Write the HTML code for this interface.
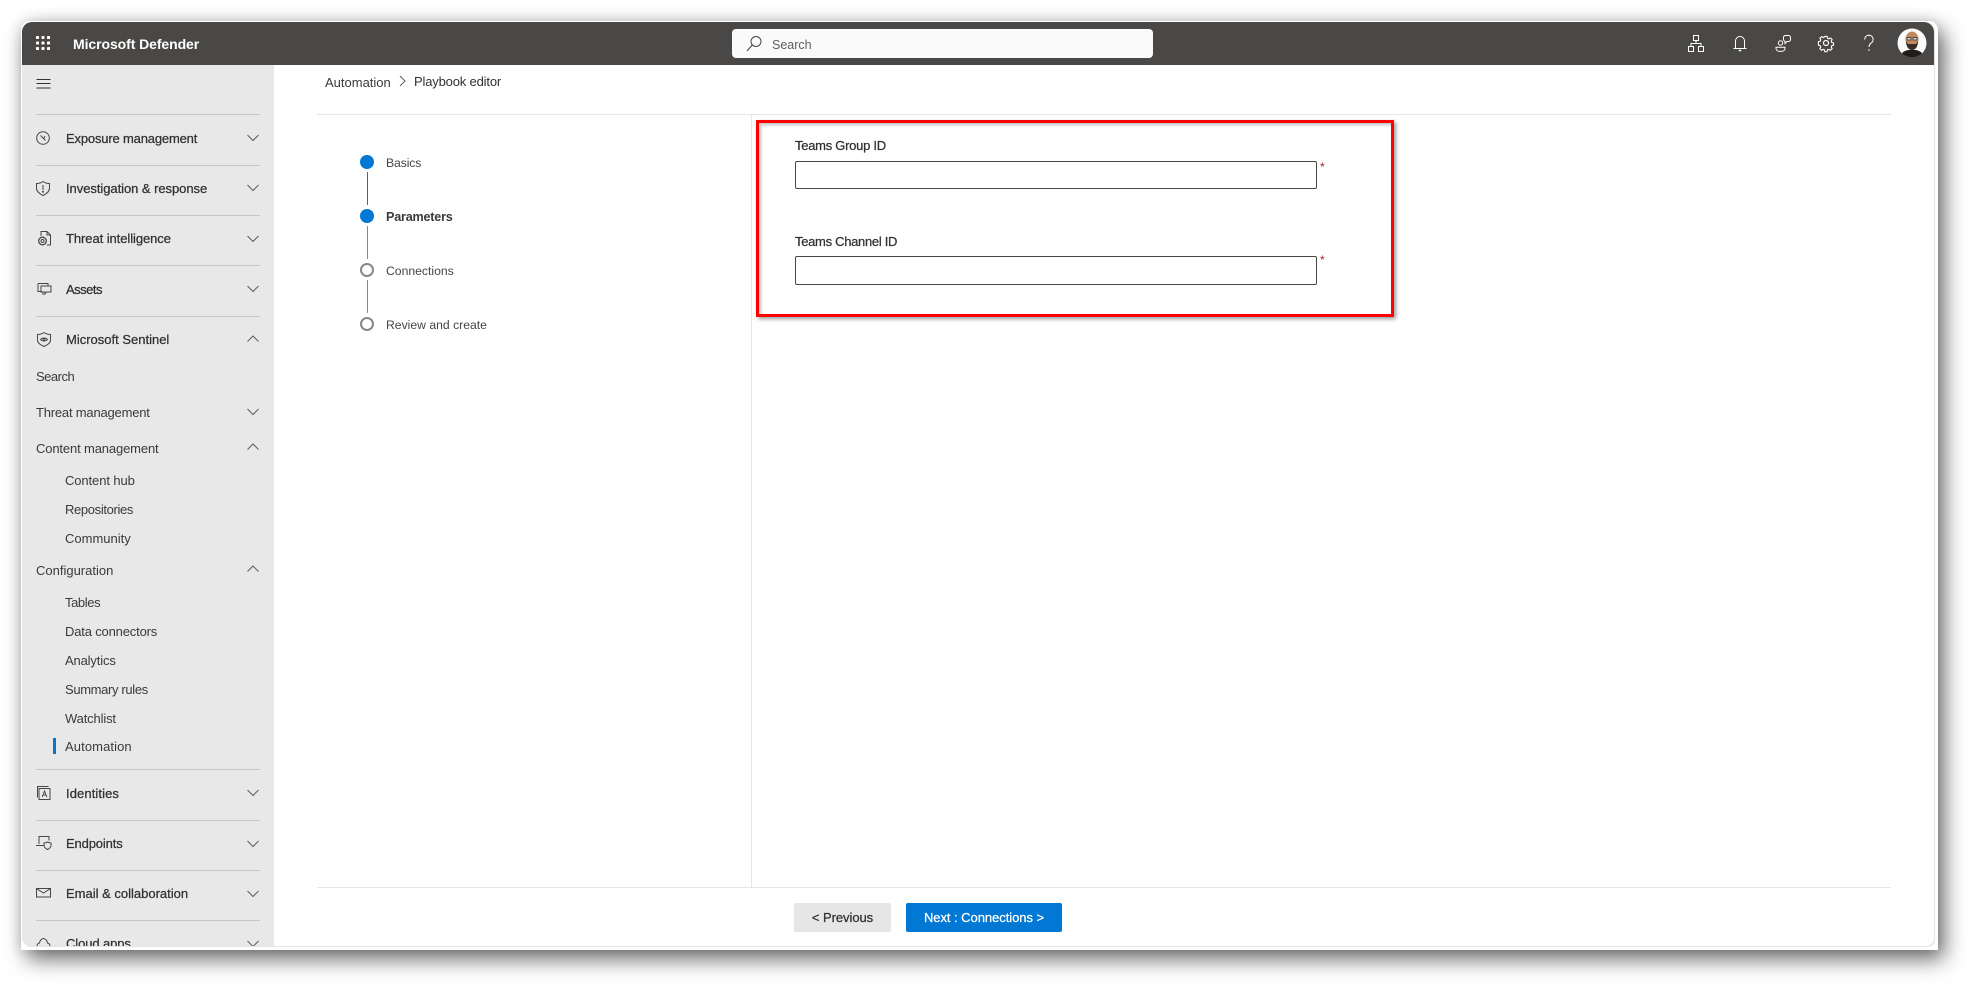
<!DOCTYPE html>
<html lang="en"><head><meta charset="utf-8"><title>Microsoft Defender</title>
<style>
html,body{margin:0;padding:0;background:#fff;width:1980px;height:993px;overflow:hidden}
body{position:relative;font-family:"Liberation Sans",sans-serif;color:#323130}
.abs,.t,.d,.c,.i{position:absolute}
.t{font-size:13px;line-height:20px;white-space:nowrap;color:#3b3a39}
.m{-webkit-text-stroke:.25px currentColor;color:#323130}
.d{left:14px;width:224px;height:1px;background:#c6c6c6}
.c{left:225px;width:12px;height:8px;fill:none;stroke:#605e5c;stroke-width:1}
.i{fill:none;stroke:#484644;stroke-width:1}
.s{font-size:12.2px;color:#484644}
svg{overflow:visible}
#frame{position:absolute;left:21px;top:21px;width:1917px;height:929px;background:#fff;border-radius:9px 9px 0 0;box-shadow:6px 9px 22px rgba(0,0,0,.58),0 0 14px rgba(0,0,0,.12)}
#win{position:absolute;left:22px;top:22px;width:1912px;height:924px;overflow:hidden;border-radius:10px 10px 8px 8px;background:#fff;box-shadow:1px 1px 0 #e4e4e4}
#top{position:absolute;left:0;top:0;width:1912px;height:43px;background:#4a4846}
#side{position:absolute;left:0;top:43px;width:252px;height:881px;background:#e8e8e8;overflow:hidden}
</style></head><body>
<div id="frame"></div>
<div id="win">
 <div id="top">
  <svg class="abs" style="left:14px;top:14px" width="14" height="14" fill="#fff"><rect x="0" y="0" width="3" height="3" rx=".8"/><rect x="5.5" y="0" width="3" height="3" rx=".8"/><rect x="11" y="0" width="3" height="3" rx=".8"/><rect x="0" y="5.5" width="3" height="3" rx=".8"/><rect x="5.5" y="5.5" width="3" height="3" rx=".8"/><rect x="11" y="5.5" width="3" height="3" rx=".8"/><rect x="0" y="11" width="3" height="3" rx=".8"/><rect x="5.5" y="11" width="3" height="3" rx=".8"/><rect x="11" y="11" width="3" height="3" rx=".8"/></svg>
  <span class="t" style="left:51px;top:12px;color:#fff;font-size:14px;font-weight:bold;letter-spacing:-.08px">Microsoft Defender</span>
  <div class="abs" style="left:710px;top:7px;width:421px;height:29px;background:#fafafa;border-radius:4px"></div>
  <svg class="abs" style="left:724px;top:13px" width="16" height="17" fill="none" stroke="#484644"><circle cx="10" cy="6.5" r="5"/><path d="M6.3 10 1 16"/></svg>
  <span class="t" style="left:750px;top:13px;font-size:12.5px;color:#605e5c">Search</span>
  <svg class="abs" style="left:1666px;top:13px" width="16" height="17" fill="none" stroke="#fff"><rect x="5.5" y=".5" width="5" height="5"/><rect x=".5" y="11.5" width="5" height="5"/><rect x="10.5" y="11.5" width="5" height="5"/><path d="M8 5.5v3M3 11.5v-3h10v3"/></svg>
  <svg class="abs" style="left:1711px;top:13px" width="14" height="17" fill="none" stroke="#fff"><path d="M2.5 13V6a4.5 4.5 0 0 1 9 0v7M.5 13.5h13"/><path d="M5.8 15.5h2.4" stroke-width="1.5"/></svg>
  <svg class="abs" style="left:1753px;top:13px" width="16" height="17" fill="none" stroke="#fff"><circle cx="5.5" cy="8" r="2.2"/><path d="M1 12.2h9v1.2a3.5 3.5 0 0 1-3.5 3H4.500a3.500 3.500 0 0 1-3.500-3z"/><path d="M8.500 2.500a2 2 0 0 1 2-2h3a2 2 0 0 1 2 2v2a2 2 0 0 1-2 2h-1.500l-2 2V6.300a2 2 0 0 1-1.500-1.800z"/></svg>
  <svg class="abs" style="left:1796px;top:13px" width="16" height="16" viewBox="0 0 16 16" fill="none" stroke="#fff" stroke-width="1.200"><circle cx="8" cy="8" r="2.500"/><path d="M6.700.7h2.600l.4 2 1.500.7 1.800-1 1.800 1.800-1 1.800.6 1.500 2 .5v2.500l-2 .5-.6 1.500 1 1.800-1.800 1.800-1.800-1-1.500.6-.4 2H6.700l-.4-2-1.500-.6-1.800 1-1.800-1.800 1-1.800-.6-1.500-2-.5V6.500l2-.5.600-1.500-1-1.800 1.800-1.800 1.800 1 1.500-.7z" transform="translate(.8 .8) scale(.9)"/></svg>
  <svg class="abs" style="left:1842px;top:13px" width="10" height="17" fill="none" stroke="#fff"><path d="M.7 4.500a4.200 4.200 0 1 1 6.700 3.300C6 9 5 9.800 5 12"/><circle cx="5" cy="15" r=".8" fill="#fff" stroke="none"/></svg>
  <svg class="abs" style="left:1875px;top:6px" width="30" height="30" viewBox="0 0 30 30"><defs><clipPath id="av"><circle cx="15" cy="15" r="14.500"/></clipPath></defs><circle cx="15" cy="15" r="14.500" fill="#fbfbfb"/><g clip-path="url(#av)"><path d="M3 31c0-6 4-8 8-9h8c4 1 8 3 8 9z" fill="#1f1d1c"/><ellipse cx="15" cy="11.500" rx="6.500" ry="8" fill="#c08a5e"/><path d="M9 13c0 5 2 9 6 9s6-4 6-9c-1 2.500-2 3-3 3h-6c-1 0-2-.5-3-3z" fill="#3a2c22"/><path d="M10 9.500h4v2.500h-4zM16 9.500h4v2.500h-4z" fill="#cfcfcf" stroke="#333" stroke-width=".7"/></g></svg>
 </div>
 <div id="side">
  <svg class="abs" style="left:14px;top:13px" width="16" height="10" stroke="#323130"><path d="M.5 1.500h14M.5 5.500h14M.5 10h14"/></svg>
  <div class="d" style="top:49px"></div>
  <svg class="i" style="left:14px;top:66px" width="15" height="15"><circle cx="7" cy="7" r="6.300"/><path d="M4.500 4.500 7 7l2.500 2.500M9 5 7.500 8"/></svg>
  <span class="t m" style="left:44px;top:64px;letter-spacing:-.17px">Exposure management</span>
  <svg class="c" style="top:69px"><path d="M.5 1 6 6.500 11.500 1"/></svg>
  <div class="d" style="top:100px"></div>
  <svg class="i" style="left:14px;top:116px" width="14" height="15"><path d="M7 .5C5 2 3 2.500.5 2.500V7c0 3.500 2.500 5.500 6.500 7.500 4-2 6.500-4 6.500-7.500V2.500C11 2.500 9 2 7 .5zM7 4v5"/><circle cx="7" cy="10.800" r=".5"/></svg>
  <span class="t m" style="left:44px;top:114px;letter-spacing:-.05px">Investigation &amp; response</span>
  <svg class="c" style="top:119px"><path d="M.5 1 6 6.500 11.500 1"/></svg>
  <div class="d" style="top:150px"></div>
  <svg class="i" style="left:16px;top:166px" width="13" height="15"><path d="M3 5V.5h6l3.500 3.500v10H9M9 .5V4h3.500"/><circle cx="4.500" cy="10" r="3.800" stroke-width="1.300"/><circle cx="4.500" cy="10" r="1.500"/></svg>
  <span class="t m" style="left:44px;top:164px;letter-spacing:-.07px">Threat intelligence</span>
  <svg class="c" style="top:170px"><path d="M.5 1 6 6.500 11.500 1"/></svg>
  <div class="d" style="top:200px"></div>
  <svg class="i" style="left:15px;top:218px" width="15" height="14"><path d="M1 .5h10v2.500M5 8.500H1V.5M4 3h10v6H9.500L8 11V9H4zM6 12v-2.500"/></svg>
  <span class="t m" style="left:44px;top:215px;letter-spacing:-.5px">Assets</span>
  <svg class="c" style="top:220px"><path d="M.5 1 6 6.500 11.500 1"/></svg>
  <div class="d" style="top:251px"></div>
  <svg class="i" style="left:15px;top:267px" width="14" height="15"><path d="M7 .5C5 2 3 2.500.5 2.500V8c0 3 2.500 4.500 6.500 6.500 4-2 6.500-3.500 6.500-6.500V2.500C11 2.500 9 2 7 .5z"/><path d="M3.500 7.500C5 5.500 9 5.500 10.500 7.500 9 9.500 5 9.500 3.500 7.500z"/><circle cx="7" cy="7.500" r="1"/></svg>
  <span class="t m" style="left:44px;top:265px">Microsoft Sentinel</span>
  <svg class="c" style="top:270px"><path d="M.5 6.500 6 1l5.500 5.500"/></svg>
  <span class="t" style="left:14px;top:302px;letter-spacing:-.5px">Search</span>
  <span class="t" style="left:14px;top:338px;letter-spacing:-.2px">Threat management</span>
  <svg class="c" style="top:343px"><path d="M.5 1 6 6.500 11.500 1"/></svg>
  <span class="t" style="left:14px;top:374px;letter-spacing:-.14px">Content management</span>
  <svg class="c" style="top:378px"><path d="M.5 6.500 6 1l5.500 5.500"/></svg>
  <span class="t" style="left:43px;top:406px;letter-spacing:-.1px">Content hub</span>
  <span class="t" style="left:43px;top:435px;letter-spacing:-.35px">Repositories</span>
  <span class="t" style="left:43px;top:464px">Community</span>
  <span class="t" style="left:14px;top:496px">Configuration</span>
  <svg class="c" style="top:500px"><path d="M.5 6.500 6 1l5.500 5.500"/></svg>
  <span class="t" style="left:43px;top:528px;letter-spacing:-.4px">Tables</span>
  <span class="t" style="left:43px;top:557px;letter-spacing:-.17px">Data connectors</span>
  <span class="t" style="left:43px;top:586px;letter-spacing:-.15px">Analytics</span>
  <span class="t" style="left:43px;top:615px;letter-spacing:-.35px">Summary rules</span>
  <span class="t" style="left:43px;top:644px;letter-spacing:-.15px">Watchlist</span>
  <div class="abs" style="left:31px;top:673px;width:3px;height:16px;background:#0078d4"></div>
  <span class="t" style="left:43px;top:672px;letter-spacing:.1px">Automation</span>
  <div class="d" style="top:704px"></div>
  <svg class="i" style="left:15px;top:721px" width="14" height="14"><path d="M.5 11.500V.5h11M2 2.500h11v11H2z"/><path d="M5.200 11 7.500 5l2.300 6M6 9h3"/></svg>
  <span class="t m" style="left:44px;top:719px;letter-spacing:.1px">Identities</span>
  <svg class="c" style="top:724px"><path d="M.5 1 6 6.500 11.500 1"/></svg>
  <div class="d" style="top:755px"></div>
  <svg class="i" style="left:14px;top:771px" width="16" height="14"><path d="M3 8V.5h10v4M0 9.500h8"/><path d="M8 7c1.500 0 2.500-.5 3.500-1 1 .5 2 1 3.500 1v2.500c0 2-1.500 3-3.500 4-2-1-3.500-2-3.500-4z"/></svg>
  <span class="t m" style="left:44px;top:769px;letter-spacing:-.14px">Endpoints</span>
  <svg class="c" style="top:775px"><path d="M.5 1 6 6.500 11.500 1"/></svg>
  <div class="d" style="top:805px"></div>
  <svg class="i" style="left:14px;top:823px" width="15" height="10"><rect x=".5" y=".5" width="14" height="8.500"/><path d="M.5 .5 7.500 5l7-4.500"/></svg>
  <span class="t m" style="left:44px;top:819px">Email &amp; collaboration</span>
  <svg class="c" style="top:825px"><path d="M.5 1 6 6.500 11.500 1"/></svg>
  <div class="d" style="top:855px"></div>
  <svg class="i" style="left:14px;top:873px" width="15" height="12"><path d="M1 11V8.500C1 6 2 5.500 3.500 5 4 2 6 .5 7.500.5S11 2 11.500 5C13 5.500 14 6 14 8.500V11"/></svg>
  <span class="t m" style="left:44px;top:869px;letter-spacing:-.1px">Cloud apps</span>
  <svg class="c" style="top:875px"><path d="M.5 1 6 6.500 11.500 1"/></svg>
 </div>

 <span class="t" style="left:303px;top:51px">Automation</span>
 <svg class="abs" style="left:377px;top:53px" width="7" height="12" fill="none" stroke="#605e5c"><path d="M1 1l5 5-5 5"/></svg>
 <span class="t" style="left:392px;top:50px;color:#323130;letter-spacing:-.17px">Playbook editor</span>
 <div class="abs" style="left:295px;top:92px;width:1574px;height:1px;background:#e6e6e6"></div>
 <div class="abs" style="left:729px;top:92px;width:1px;height:773px;background:#e6e6e6"></div>
 <div class="abs" style="left:295px;top:865px;width:1574px;height:1px;background:#e6e6e6"></div>

 <div class="abs" style="left:338px;top:133px;width:14px;height:14px;border-radius:50%;background:#0078d4"></div>
 <div class="abs" style="left:345px;top:150px;width:1px;height:33px;background:#0078d4"></div>
 <div class="abs" style="left:338px;top:187px;width:14px;height:14px;border-radius:50%;background:#0078d4"></div>
 <div class="abs" style="left:345px;top:204px;width:1px;height:33px;background:#8a8886"></div>
 <div class="abs" style="left:338px;top:241px;width:10px;height:10px;border-radius:50%;border:2px solid #8a8886"></div>
 <div class="abs" style="left:345px;top:258px;width:1px;height:33px;background:#8a8886"></div>
 <div class="abs" style="left:338px;top:295px;width:10px;height:10px;border-radius:50%;border:2px solid #8a8886"></div>
 <span class="t s" style="left:364px;top:131px;letter-spacing:-.1px">Basics</span>
 <span class="t" style="left:364px;top:185px;font-size:12.6px;font-weight:bold;letter-spacing:-.2px">Parameters</span>
 <span class="t s" style="left:364px;top:239px">Connections</span>
 <span class="t s" style="left:364px;top:293px">Review and create</span>

 <div class="abs" style="left:734px;top:98px;width:632px;height:191px;border:3px solid #f00;box-shadow:2px 2px 4px rgba(0,0,0,.4),inset 2px 2px 3px rgba(0,0,0,.25)"></div>
 <span class="t m" style="left:773px;top:114px;letter-spacing:-.27px">Teams Group ID</span>
 <div class="abs" style="left:773px;top:139px;width:520px;height:26px;border:1px solid #484644;border-radius:2px;background:#fff"></div>
 <span class="t" style="left:1298px;top:135px;color:#a4262c;font-size:12px">*</span>
 <span class="t m" style="left:773px;top:210px;letter-spacing:-.3px">Teams Channel ID</span>
 <div class="abs" style="left:773px;top:234px;width:520px;height:27px;border:1px solid #484644;border-radius:2px;background:#fff"></div>
 <span class="t" style="left:1298px;top:228px;color:#a4262c;font-size:12px">*</span>

 <div class="abs" style="left:772px;top:881px;width:97px;height:29px;background:#e6e6e6;border-radius:2px"></div>
 <span class="t m" style="left:772px;width:97px;text-align:center;top:886px;letter-spacing:-.05px">&lt; Previous</span>
 <div class="abs" style="left:884px;top:881px;width:156px;height:29px;background:#0078d4;border-radius:2px"></div>
 <span class="t m" style="left:884px;width:156px;text-align:center;top:886px;color:#fff;letter-spacing:-.05px">Next : Connections &gt;</span>
</div>
</body></html>
